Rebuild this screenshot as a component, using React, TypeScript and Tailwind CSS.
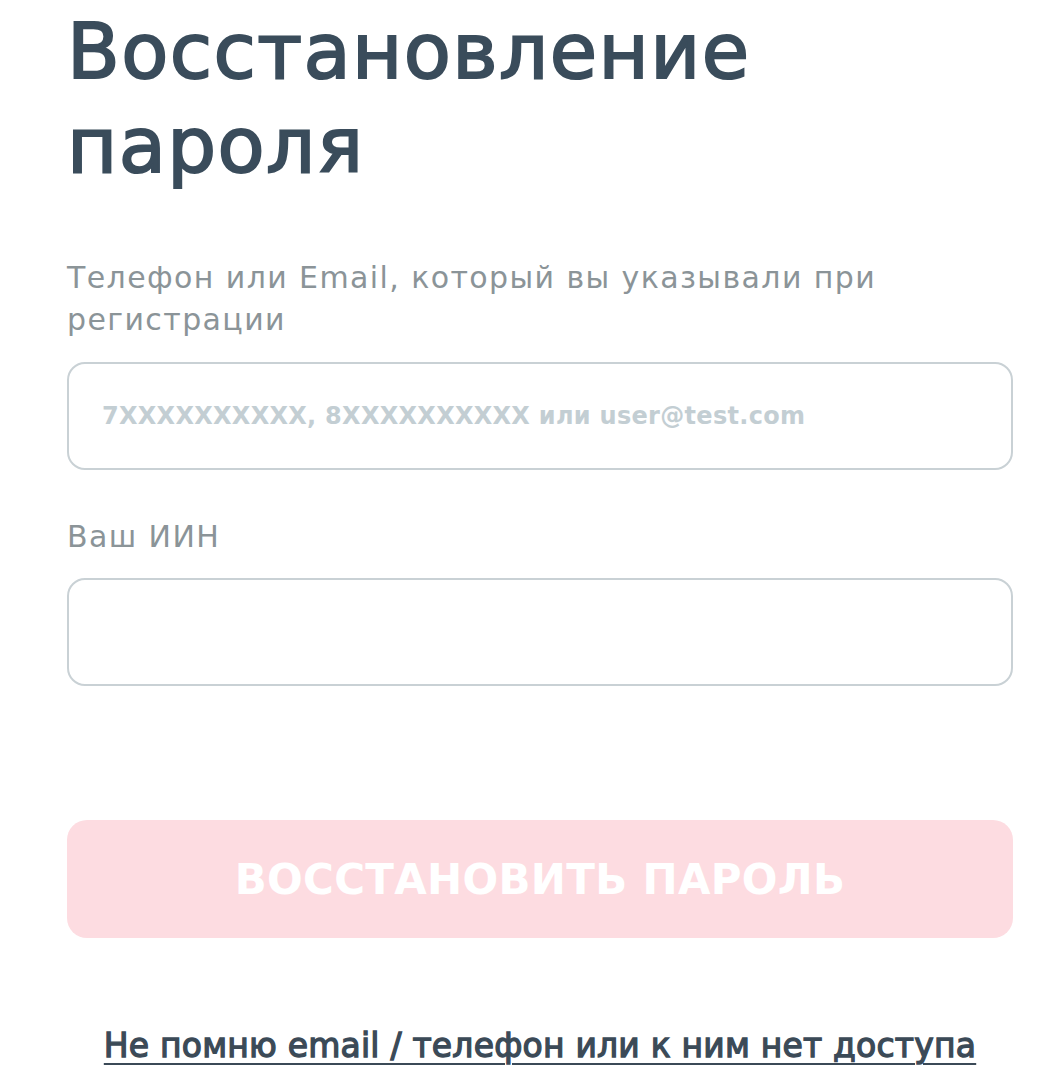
import React from "react";

export default function App() {
  return (
    <div className="min-h-[1092px] w-[1056px] bg-white font-['DejaVu_Sans',sans-serif] overflow-hidden">
      <div className="pl-[67px] w-[1013px] pt-[5px]">
        <h1 className="text-[77px] leading-[94px] font-normal tracking-[1.4px] text-[#3a4c5b] [-webkit-text-stroke:2px_#3a4c5b] m-0">
          Восстановление
          <br />
          пароля
        </h1>
        <label className="block mt-[64px] text-[30px] leading-[42px] tracking-[1.4px] text-[#8b9498]">
          Телефон или Email, который вы указывали при регистрации
        </label>
        <input
          type="text"
          placeholder="7XXXXXXXXXX, 8XXXXXXXXXX или user@test.com"
          className="block mt-[21px] w-full h-[108px] rounded-[18px] border-2 border-[#c9d1d5] px-[33px] text-[24px] tracking-[0.3px] font-bold text-[#3a4c5b] placeholder:text-[#c3ced3] outline-none bg-white"
        />
        <label className="block mt-[46px] text-[30px] leading-[42px] tracking-[1.4px] text-[#8b9498]">
          Ваш ИИН
        </label>
        <input
          type="text"
          className="block mt-[20px] w-full h-[108px] rounded-[18px] border-2 border-[#c9d1d5] px-[33px] text-[24px] font-bold text-[#3a4c5b] outline-none bg-white"
        />
        <button
          type="button"
          className="block mt-[134px] w-full h-[118px] rounded-[20px] bg-[#fddce1] text-white text-[42px] font-bold tracking-[0.3px]"
        >
          ВОССТАНОВИТЬ ПАРОЛЬ
        </button>
        <div className="mt-[88px] flex justify-center">
          <a
            href="#"
            className="whitespace-nowrap text-[33px] leading-[40px] font-normal tracking-[0.2px] text-[#3b4a57] [-webkit-text-stroke:1.3px_#3b4a57] underline underline-offset-[6px] decoration-[2px]"
          >
            Не помню email / телефон или к ним нет доступа
          </a>
        </div>
      </div>
    </div>
  );
}
